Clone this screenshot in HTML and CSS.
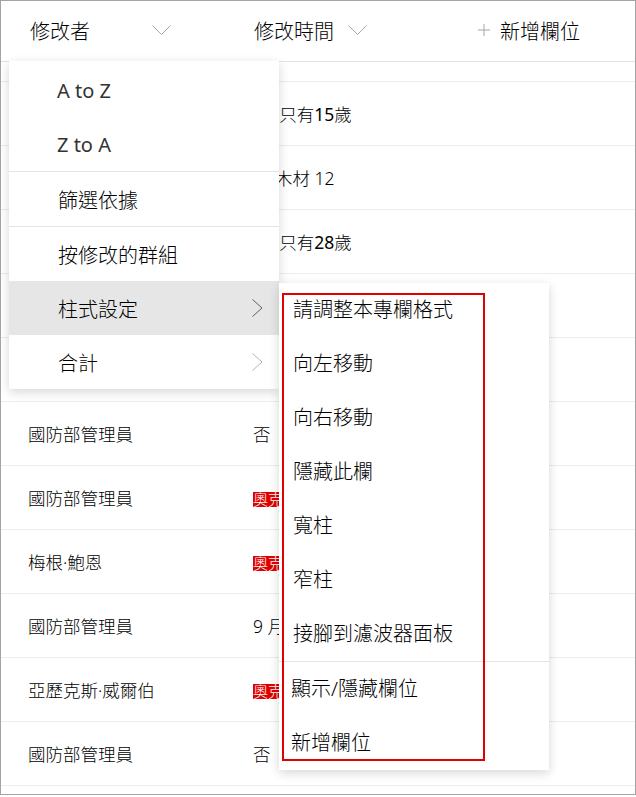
FILE: index.html
```html
<!DOCTYPE html>
<html lang="zh-Hant">
<head>
  <meta charset="UTF-8" />
  <meta name="viewport" content="width=device-width, initial-scale=1.0"/>
  <title>清單</title>
  <link rel="stylesheet" href="styles.css">
</head>
<body>

  <div class="list">
    <div class="row head">
      <div class="hcell first">
        <span>修改者</span>
        <svg class="down" width="19" height="10" viewBox="0 0 19 10"><path d="M0.5 0.5 9.5 9.5 18.5 0.5" /></svg>
      </div>
      <div class="hcell second">
        <span>修改時間</span>
        <svg class="down" width="19" height="10" viewBox="0 0 19 10"><path d="M0.5 0.5 9.5 9.5 18.5 0.5" /></svg>
      </div>
      <div class="hcell third">
        <svg class="plus" width="12" height="12" viewBox="0 0 12 12"><path d="M6 0v12M0 6h12" /></svg>
        <span>新增欄位</span>
      </div>
    </div>
    <div class="row gap"></div>

    <div class="row"><div class="cell">國防部管理員</div><div class="cell">他&ensp;只有<span class="num">15</span>歲</div><div class="cell"></div></div>
    <div class="row"><div class="cell">國防部管理員</div><div class="cell">原 木材 12</div><div class="cell"></div></div>
    <div class="row"><div class="cell">國防部管理員</div><div class="cell">她&ensp;只有<span class="num">28</span>歲</div><div class="cell"></div></div>
    <div class="row"><div class="cell">國防部管理員</div><div class="cell">否</div><div class="cell"></div></div>
    <div class="row"><div class="cell">國防部管理員</div><div class="cell">否</div><div class="cell"></div></div>
    <div class="row"><div class="cell">國防部管理員</div><div class="cell">否</div><div class="cell"></div></div>
    <div class="row"><div class="cell">國防部管理員</div><div class="cell"><span class="tag">奧克蘭</span></div><div class="cell"></div></div>
    <div class="row"><div class="cell">梅根·鮑恩</div><div class="cell"><span class="tag">奧克蘭</span></div><div class="cell"></div></div>
    <div class="row"><div class="cell">國防部管理員</div><div class="cell">9 月 20 日</div><div class="cell"></div></div>
    <div class="row"><div class="cell">亞歷克斯·威爾伯</div><div class="cell"><span class="tag">奧克蘭</span></div><div class="cell"></div></div>
    <div class="row"><div class="cell">國防部管理員</div><div class="cell">否</div><div class="cell"></div></div>

    <!-- column header dropdown -->
    <div class="menu">
      <div class="item latin">A to Z</div>
      <div class="item latin">Z to A</div>
      <div class="sep"></div>
      <div class="item">篩選依據</div>
      <div class="sep"></div>
      <div class="item">按修改的群組</div>
      <div class="item on">
        <span>柱式設定</span>
        <svg class="right" width="11" height="18" viewBox="0 0 11 18"><path d="M0.5 0.5 10 9 0.5 17.5" /></svg>
      </div>
      <div class="item">
        <span>合計</span>
        <svg class="right light" width="11" height="18" viewBox="0 0 11 18"><path d="M0.5 0.5 10 9 0.5 17.5" /></svg>
      </div>
    </div>

    <!-- column settings flyout -->
    <div class="menu sub">
      <div class="item">請調整本專欄格式</div>
      <div class="item">向左移動</div>
      <div class="item">向右移動</div>
      <div class="item">隱藏此欄</div>
      <div class="item">寬柱</div>
      <div class="item">窄柱</div>
      <div class="item">接腳到濾波器面板</div>
      <div class="sep"></div>
      <div class="item tight">顯示/隱藏欄位</div>
      <div class="item tight">新增欄位</div>
    </div>

    <div class="mark"></div>
  </div>

</body>
</html>
```

FILE: styles.css
```css
body {
  font-family: "Noto Sans", "Noto Sans CJK TC", sans-serif;
  font-weight: 300;
  background: #fff;
  margin: 0;
  color: #000;
}

.list {
  position: relative;
  width: 636px;
  height: 795px;
  box-sizing: border-box;
  border: 1px solid #a3a3a3;
  overflow: hidden;
}

.row {
  display: grid;
  grid-template-columns: 225px 225px 1fr;
  align-items: center;
  height: 64px;
  box-sizing: border-box;
  border-bottom: 1px solid #ededed;
}

.row.head {
  height: 61px;
  border-bottom-color: #e3e3e3;
  padding-bottom: 2px;
}

.row.gap {
  height: 20px;
}

.hcell {
  display: flex;
  align-items: center;
  font-size: 20px;
  white-space: nowrap;
}

.hcell.first { padding-left: 29px; }
.hcell.second { padding-left: 28px; }
.hcell.third { padding-left: 27px; }

.hcell.first .down { margin-left: 62px; }
.hcell.second .down { margin-left: 14px; }
.hcell .plus { margin-right: 10px; }

.down path,
.plus path {
  fill: none;
  stroke: #a6a6a6;
  stroke-width: 1;
}

.cell {
  padding-left: 27px;
  font-size: 17.5px;
  white-space: nowrap;
  overflow: hidden;
}

.num {
  font-weight: 400;
}

.tag {
  display: inline-block;
  background: #e00000;
  color: #fff;
  font-size: 15px;
  line-height: 15px;
  height: 15px;
  overflow: hidden;
  vertical-align: middle;
}

.menu {
  position: absolute;
  left: 8px;
  top: 60px;
  width: 270px;
  padding-top: 2px;
  background: #fff;
  box-shadow: 0 3px 10px rgba(0, 0, 0, 0.16);
}

.menu .item {
  display: flex;
  align-items: center;
  justify-content: space-between;
  height: 54px;
  padding: 0 16px 0 49px;
  font-size: 20px;
  white-space: nowrap;
}

.menu .item.latin {
  color: #333;
  font-weight: 400;
  padding-left: 48px;
}

.menu .item.on {
  background: #e6e6e6;
}

.menu .sep {
  height: 1px;
  background: #e4e4e4;
}

.right path {
  fill: none;
  stroke: #5f5f5f;
  stroke-width: 1;
}

.right.light path {
  stroke: #b3b3b3;
}

.menu.sub {
  left: 278px;
  top: 282px;
  padding-top: 0;
}

.menu.sub .item {
  padding-left: 14px;
  padding-bottom: 3px;
  box-sizing: border-box;
}

.menu.sub .item.tight {
  padding-left: 12px;
}

/* red outline drawn over the flyout */
.mark {
  position: absolute;
  left: 281px;
  top: 292px;
  width: 203px;
  height: 468px;
  box-sizing: border-box;
  border: 2px solid #e00000;
}
```
